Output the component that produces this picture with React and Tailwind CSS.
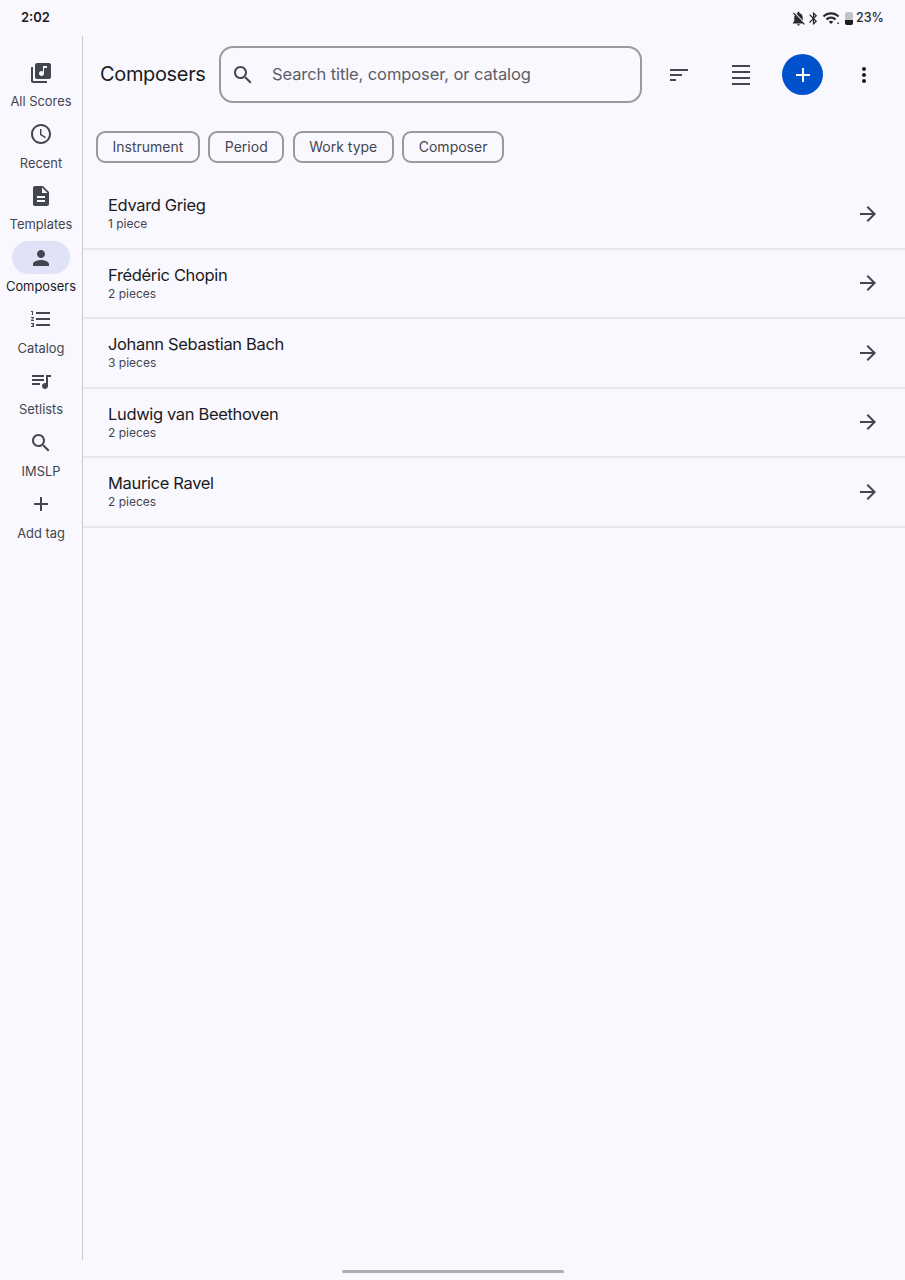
const P = {
  library: "M20 2H8c-1.1 0-2 .9-2 2v12c0 1.1.9 2 2 2h12c1.1 0 2-.9 2-2V4c0-1.1-.9-2-2-2zm-2 5h-3v5.5c0 1.38-1.12 2.5-2.5 2.5S10 13.88 10 12.5s1.12-2.5 2.5-2.5c.57 0 1.08.19 1.5.51V5h4v2zM4 6H2v14c0 1.1.9 2 2 2h14v-2H4V6z",
  schedule: "M11.99 2C6.47 2 2 6.48 2 12s4.47 10 9.99 10C17.52 22 22 17.52 22 12S17.52 2 11.99 2zM12 20c-4.42 0-8-3.58-8-8s3.58-8 8-8 8 3.58 8 8-3.58 8-8 8zm.5-13H11v6l5.25 3.15.75-1.23-4.5-2.67z",
  description: "M14 2H6c-1.1 0-1.99.9-1.99 2L4 20c0 1.1.89 2 1.99 2H18c1.1 0 2-.9 2-2V8l-6-6zm2 16H8v-2h8v2zm0-4H8v-2h8v2zm-3-5V3.5L18.5 9H13z",
  person: "M12 12c2.21 0 4-1.79 4-4s-1.79-4-4-4-4 1.79-4 4 1.79 4 4 4zm0 2c-2.67 0-8 1.34-8 4v2h16v-2c0-2.66-5.33-4-8-4z",
  numbered: "M2 17h2v.5H3v1h1v.5H2v1h3v-4H2v1zm1-9h1V4H2v1h1v3zm-1 3h1.8L2 13.1v.9h3v-1H3.2L5 10.9V10H2v1zm5-6v2h14V5H7zm0 14h14v-2H7v2zm0-6h14v-2H7v2z",
  queue: "M15 6H3v2h12V6zm0 4H3v2h12v-2zM3 16h8v-2H3v2zM17 6v8.18c-.31-.11-.65-.18-1-.18-1.66 0-3 1.34-3 3s1.34 3 3 3 3-1.34 3-3V8h3V6h-5z",
  search: "M15.5 14h-.79l-.28-.27C15.41 12.59 16 11.11 16 9.5 16 5.91 13.09 3 9.5 3S3 5.91 3 9.5 5.91 16 9.5 16c1.61 0 3.09-.59 4.23-1.57l.27.28v.79l5 4.99L20.49 19l-4.99-5zm-6 0C7.01 14 5 11.99 5 9.5S7.01 5 9.5 5 14 7.01 14 9.5 11.99 14 9.5 14z",
  add: "M19 13h-6v6h-2v-6H5v-2h6V5h2v6h6v2z",
  sort: "M3 18h6v-2H3v2zM3 6v2h18V6H3zm0 7h12v-2H3v2z",
  headline: "M3 2h18v2H3zM3 8h18v2H3zM3 14h18v2H3zM3 20h18v2H3z",
  more: "M12 8c1.1 0 2-.9 2-2s-.9-2-2-2-2 .9-2 2 .9 2 2 2zm0 2c-1.1 0-2 .9-2 2s.9 2 2 2 2-.9 2-2-.9-2-2-2zm0 6c-1.1 0-2 .9-2 2s.9 2 2 2 2-.9 2-2-.9-2-2-2z",
  arrow: "M12 4l-1.41 1.41L16.17 11H4v2h12.17l-5.58 5.59L12 20l8-8z",
  belloff: "M20 18.69L7.84 6.14 5.27 3.49 4 4.76l2.8 2.8v.01c-.52.99-.8 2.16-.8 3.42v5l-2 2v1h13.73l2 2L21 19.72l-1-1.03zM12 22c1.11 0 2-.89 2-2h-4c0 1.11.89 2 2 2zm6-7.32V11c0-3.08-1.64-5.64-4.5-6.32V4c0-.83-.67-1.5-1.5-1.5s-1.5.67-1.5 1.5v.68c-.15.03-.29.08-.42.12-.1.03-.2.07-.3.11h-.01c-.2.08-.4.17-.59.27-.01 0-.01 0-.02.01L18 14.68z",
  bluetooth: "M17.71 7.71L12 2h-1v7.59L6.41 5 5 6.41 10.59 12 5 17.59 6.41 19 11 14.41V22h1l5.71-5.71-4.3-4.29 4.3-4.29zM13 5.83l1.88 1.88L13 9.59V5.83zm1.88 10.46L13 18.17v-3.76l1.88 1.88z",
  wifi: "M1 9l2 2c4.97-4.97 13.03-4.97 18 0l2-2C16.93 2.93 7.08 2.93 1 9zm8 8l3 3 3-3c-1.65-1.66-4.34-1.66-6 0zm-4-4l2 2c2.76-2.76 7.24-2.76 10 0l2-2C15.14 9.14 8.87 9.14 5 13zM20.5 18h2v2h-2z",
};

function Icon({ d, className = "w-6 h-6" }) {
  return (
    <svg viewBox="0 0 24 24" fill="currentColor" className={className}>
      <path d={d} />
    </svg>
  );
}

const NAV = [
  ["All Scores", P.library],
  ["Recent", P.schedule],
  ["Templates", P.description],
  ["Composers", P.person, true],
  ["Catalog", P.numbered],
  ["Setlists", P.queue],
  ["IMSLP", P.search],
  ["Add tag", P.add],
];

const ROWS = [
  ["Edvard Grieg", "1 piece"],
  ["Frédéric Chopin", "2 pieces"],
  ["Johann Sebastian Bach", "3 pieces"],
  ["Ludwig van Beethoven", "2 pieces"],
  ["Maurice Ravel", "2 pieces"],
];

const CHIPS = ["Instrument", "Period", "Work type", "Composer"];

export default function App() {
  return (
    <div className="w-[905px] h-[1280px] overflow-hidden flex flex-col bg-[#f9f8ff] text-[#1b1b21] font-['Inter',sans-serif]">
      <div className="h-9 shrink-0 flex items-center justify-between pl-[21px] pr-[21px]">
        <span className="text-[13px] font-semibold leading-none -mt-[1px]">2:02</span>
        <div className="flex items-center text-[#2a2a2e]">
          <Icon d={P.belloff} className="w-[17px] h-[17px]" />
          <Icon d={P.bluetooth} className="w-[15px] h-[15px] -ml-[1px]" />
          <Icon d={P.wifi} className="w-[18px] h-[18px] ml-[1px]" />
          <div className="w-[8px] h-[13px] ml-[5px] rounded-[2px] bg-[#c4c4c8] flex flex-col justify-end overflow-hidden">
            <div className="h-[5px] bg-[#1b1b21]" />
          </div>
          <span className="text-[12.5px] font-medium leading-none ml-[3px]">23%</span>
        </div>
      </div>

      <div className="flex-1 flex min-h-0">
        <nav className="w-[83px] shrink-0 border-r border-[#c9c9ce] pt-[20px] flex flex-col">
          {NAV.map(([label, d, active]) => (
            <div key={label} className="h-[61.7px] shrink-0 flex flex-col items-center">
              <div className={`w-[58px] h-[33px] rounded-full flex items-center justify-center text-[#44464f] ${active ? "bg-[#e0e2f8]" : ""}`}>
                <Icon d={d} />
              </div>
              <span className={`mt-[4px] text-[12.9px] leading-[18px] whitespace-nowrap ${active ? "text-[#1b1b21]" : "text-[#44464f]"}`}>{label}</span>
            </div>
          ))}
        </nav>

        <main className="flex-1 min-w-0">
          <header className="h-[78px] pt-[10px] pl-[17px] flex items-start">
            <h1 className="text-[20px] leading-[57px] font-normal text-[#1b1b21] tracking-[-0.35px] w-[119px] whitespace-nowrap">Composers</h1>
            <div className="w-[423px] h-[57px] rounded-[14px] border-2 border-[#989aa0] flex items-center pl-[10px] shrink-0">
              <Icon d={P.search} className="w-6 h-6 text-[#44464f]" />
              <span className="ml-[17px] text-[16.5px] tracking-[-0.1px] text-[#5c5e66] whitespace-nowrap">Search title, composer, or catalog</span>
            </div>
            <div className="h-[57px] flex items-center">
              <Icon d={P.sort} className="w-6 h-6 ml-[25px] text-[#44464f]" />
              <Icon d={P.headline} className="w-6 h-6 ml-[38px] text-[#44464f]" />
              <div className="w-[41px] h-[41px] ml-[29px] rounded-full bg-[#0052cc] text-white flex items-center justify-center">
                <Icon d={P.add} className="w-6 h-6" />
              </div>
              <Icon d={P.more} className="w-6 h-6 ml-[29px] text-[#1b1b21]" />
            </div>
          </header>

          <div className="pl-[13px] mt-[17px] flex gap-[8.5px]">
            {CHIPS.map((c) => (
              <div key={c} className="h-8 px-[14.5px] pb-[1px] rounded-[9px] border-2 border-[#989aa0] flex items-center text-[14px] text-[#44464f] whitespace-nowrap">{c}</div>
            ))}
          </div>

          <ul className="mt-[17px]">
            {ROWS.map(([name, sub]) => (
              <li key={name} className="h-[69.5px] border-b-2 border-[#e8e8ec] pl-[25px] pr-[25px] flex items-center justify-between">
                <div className="-mt-[1px]">
                  <div className="text-[16.5px] tracking-[-0.35px] leading-[21px] text-[#1b1b21]">{name}</div>
                  <div className="text-[12px] leading-[15px] text-[#44464f]">{sub}</div>
                </div>
                <Icon d={P.arrow} className="w-6 h-6 text-[#44464f]" />
              </li>
            ))}
          </ul>
        </main>
      </div>

      <div className="h-5 shrink-0 flex justify-center pt-[10px]">
        <div className="w-[222px] h-[3px] rounded-full bg-[#adadb2]" />
      </div>
    </div>
  );
}
